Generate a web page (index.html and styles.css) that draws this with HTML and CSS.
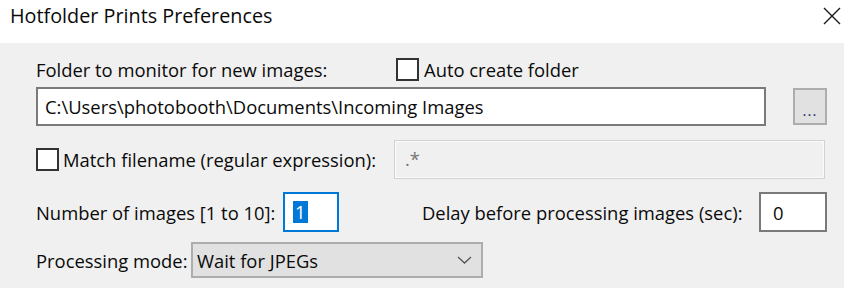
FILE: index.html
```html
<!DOCTYPE html>
<html lang="en">
<head>
  <meta charset="UTF-8" />
  <title>Hotfolder Prints Preferences</title>
  <link rel="stylesheet" href="styles.css">
</head>
<body>
  <div class="titlebar">
    <span class="title">Hotfolder Prints Preferences</span>
    <svg class="close" width="18" height="18" viewBox="0 0 18 18">
      <path d="M1 1 L17 17 M17 1 L1 17" stroke="#1a1a1a" stroke-width="1.4" fill="none" />
    </svg>
  </div>

  <div class="content">
    <div class="row row-folder">
      <span class="label folder-label">Folder to monitor for new images:</span>
      <span class="check"></span>
      <span class="check-text">Auto create folder</span>
    </div>

    <div class="row row-path">
      <div class="field path-field">C:\Users\photobooth\Documents\Incoming Images</div>
      <div class="button browse">...</div>
    </div>

    <div class="row row-match">
      <span class="check"></span>
      <span class="check-text match-label">Match filename (regular expression):</span>
      <div class="field regex-field">.*</div>
    </div>

    <div class="row row-count">
      <span class="label count-label">Number of images [1 to 10]:</span>
      <div class="field count-field"><span class="selected">1</span></div>
      <span class="label delay-label">Delay before processing images (sec):</span>
      <div class="field delay-field">0</div>
    </div>

    <div class="row row-mode">
      <span class="label mode-label">Processing mode:</span>
      <div class="dropdown">
        <span>Wait for JPEGs</span>
        <svg class="chevron" width="15" height="8" viewBox="0 0 15 8">
          <path d="M1 1 L7.5 7 L14 1" stroke="#555" stroke-width="1.3" fill="none" />
        </svg>
      </div>
    </div>
  </div>
</body>
</html>
```

FILE: styles.css
```css
body {
  margin: 0;
  background: #f0f0f0;
  font-family: 'Open Sans', 'Noto Sans', sans-serif;
  font-size: 18.4px;
  color: #0a0a0a;
}
.titlebar {
  height: 43px;
  background: #fff;
  display: flex;
  align-items: flex-start;
  justify-content: space-between;
  padding: 0 3px 0 10px;
}
.title {
  font-size: 19.8px;
  margin-top: 2px;
}
.close {
  margin-top: 7px;
}
.content {
  padding: 13px 17px 0 36px;
}
.row {
  display: flex;
  align-items: center;
}
.row-folder {
  height: 26px;
}
.folder-label {
  width: 360px;
}
.check {
  width: 19px;
  height: 19px;
  border: 2px solid #333;
  background: #fff;
  flex-shrink: 0;
}
.check-text {
  margin-left: 5px;
}
.field {
  display: flex;
  align-items: center;
  box-sizing: border-box;
  background: #fff;
  border: 2px solid #7a7a7a;
  padding: 0 7px;
}
.row-path {
  margin-top: 5px;
}
.path-field {
  width: 730px;
  height: 39px;
}
.button {
  box-sizing: border-box;
  background: #e1e1e1;
  border: 2px solid #adadad;
}
.browse {
  margin-left: 27px;
  width: 34px;
  height: 37px;
  display: flex;
  align-items: center;
  justify-content: center;
  padding-top: 6px;
  font-size: 15px;
  color: #1a2a60;
  letter-spacing: 1px;
}
.row-match {
  margin-top: 14px;
}
.match-label {
  margin-left: 4px;
  width: 331px;
}
.regex-field {
  width: 431px;
  height: 39px;
  background: #f0f0f0;
  border: 1px solid #d2d2d2;
  box-shadow: inset 0 0 0 1px #fbfbfb;
  color: #777;
  padding: 0 10px;
  align-items: flex-start;
  padding-top: 5px;
}
.row-count {
  margin-top: 13px;
}
.count-label {
  width: 247px;
}
.count-field {
  width: 56px;
  height: 40px;
  border-color: #0078d7;
  padding: 0 8px;
}
.selected {
  background: #0078d7;
  color: #fff;
  padding: 0 2px;
  line-height: 22px;
}
.delay-label {
  margin-left: 83px;
  width: 337px;
}
.delay-field {
  width: 68px;
  height: 40px;
  padding: 0 12px;
}
.row-mode {
  margin-top: 10px;
}
.mode-label {
  width: 155px;
}
.dropdown {
  box-sizing: border-box;
  width: 292px;
  height: 36px;
  background: #e1e1e1;
  border: 2px solid #adadad;
  display: flex;
  align-items: center;
  justify-content: space-between;
  padding: 0 9px 0 4px;
}
```
